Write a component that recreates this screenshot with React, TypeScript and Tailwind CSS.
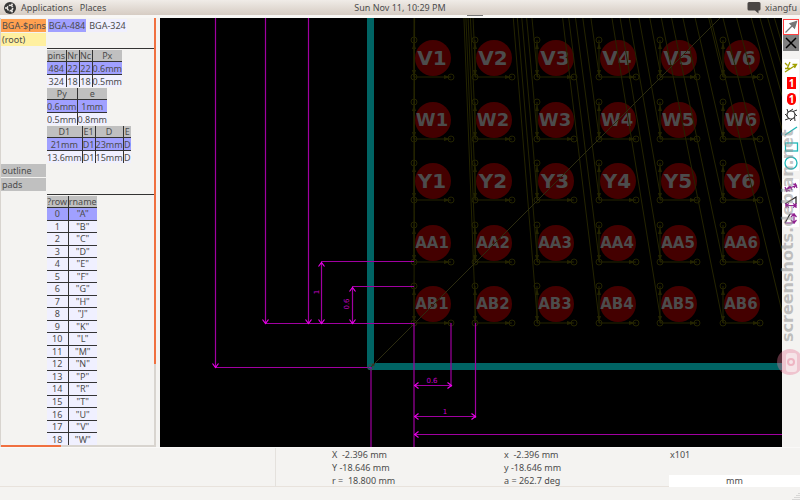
import type { ReactNode } from "react";
import clsx from "clsx";

const MAGENTA = "#a000a0";
const ARROW = "#f000f0";
const VECTOR = "#242400";

const PITCH = 62;
const columns = [433, 494, 556, 618, 679, 742];
const rows = [
  { name: "V", y: 58, size: 20 },
  { name: "W", y: 120, size: 18 },
  { name: "Y", y: 181, size: 20 },
  { name: "AA", y: 243, size: 15 },
  { name: "AB", y: 304, size: 15 },
];

const rowNames = ["A", "B", "C", "D", "E", "F", "G", "H", "J", "K", "L", "M", "N", "P", "R", "T", "U", "V", "W"];

type Dim = { x1: number; y1: number; x2: number; y2: number; start?: boolean };

const dims: Dim[] = [
  { x1: 215, y1: 10, x2: 215, y2: 367 },
  { x1: 265, y1: 10, x2: 265, y2: 323 },
  { x1: 308, y1: 10, x2: 308, y2: 323 },
  { x1: 321, y1: 262, x2: 321, y2: 323, start: true },
  { x1: 352, y1: 287, x2: 352, y2: 323, start: true },
  { x1: 414, y1: 385, x2: 451, y2: 385, start: true },
  { x1: 414, y1: 416, x2: 475, y2: 416, start: true },
  { x1: 800, y1: 434, x2: 414, y2: 434 },
];

const guides = [
  "M321 261.5H414",
  "M352 286.5H414",
  "M265 323.5H414",
  "M216 367.5H371",
  "M371 367V450",
  "M414 323V450",
  "M451 323V387",
  "M475.5 323V418",
];

function Pad({ x, y, label, size }: { x: number; y: number; label: string; size: number }) {
  const left = x - 19;
  const bottom = y + 19;
  return (
    <g>
      <circle cx={x} cy={y} r={18} fill="#440000" />
      <text x={x - 1} y={y + Math.round(size * 0.36)} fontSize={size} textAnchor="middle" fill="#4c4c4c" className="font-['DejaVu_Sans'] font-bold">
        {label}
      </text>
      <g stroke={VECTOR} fill="none">
        <circle cx={left} cy={bottom} r={3} />
        <circle cx={left} cy={y - 18} r={3} />
        <circle cx={x + 18} cy={bottom} r={3} />
        <path d={`M${left} ${y - 18}V${bottom}H${x + 18}`} />
      </g>
      <path
        fill={VECTOR}
        d={`M${left} ${y - 15}l-2 6h4z M${left} ${bottom - 1}l-2 -6h4z M${x + 17} ${bottom}l-6 -2v4z`}
      />
    </g>
  );
}

function Canvas() {
  const rays = [];
  for (let c = 0; c < 10; c++) {
    for (const row of rows) {
      rays.push({ x: 414 + c * 61.8, y: row.y + 19 });
    }
  }

  return (
    <svg viewBox="160 18 622 429" preserveAspectRatio="xMinYMin slice" className="block h-full w-full bg-black" role="img" aria-label="BGA-484 footprint">
      <defs>
        <marker id="tip" viewBox="-6 -4 7 8" refX="0" refY="0" markerWidth="7" markerHeight="8" markerUnits="userSpaceOnUse" orient="auto-start-reverse">
          <path d="M-4 -3L0 0L-4 3" fill="none" stroke={ARROW} strokeWidth="1.1" />
        </marker>
      </defs>

      <path d="M370.5 10V366.5H800" fill="none" stroke="#006464" strokeWidth="7" strokeLinejoin="round" />

      {rows.map((row) =>
        columns.map((x, i) => (
          <Pad key={`${row.name}${i + 1}`} x={x} y={row.y} label={`${row.name}${i + 1}`} size={row.size} />
        ))
      )}

      <g stroke={VECTOR} fill="none">
        {rays.map((p, i) => (
          <path key={i} d={`M417 -1190L${p.x} ${p.y}`} />
        ))}
        <path d={`M371 367L${371 + PITCH * 6} ${367 - PITCH * 6}`} stroke="#2c2c10" />
      </g>

      <g stroke={MAGENTA} strokeWidth="1.2" fill="none">
        {guides.map((d) => (
          <path key={d} d={d} />
        ))}
        {dims.map((d, i) => (
          <path
            key={i}
            d={`M${d.x1 + 0.5} ${d.y1 + 0.5}L${d.x2 + 0.5} ${d.y2 + 0.5}`}
            markerEnd="url(#tip)"
            markerStart={d.start ? "url(#tip)" : undefined}
          />
        ))}
      </g>

      <g fill="#c800c8" fontSize="7" textAnchor="middle" className="font-['DejaVu_Sans']">
        <text x="432" y="383">0.6</text>
        <text x="445" y="414">1</text>
        <text transform="translate(319 292) rotate(-90)">1</text>
        <text transform="translate(349 304) rotate(-90)">0.6</text>
      </g>

      <circle cx="371" cy="367" r="3" fill="none" stroke="#2f5050" />
      <path d="M371 367l2 -4l2 2z" fill="#3a3020" />
    </svg>
  );
}

function VarTable({ widths, head, body, className }: { widths: string[]; head: string[]; body: string[][]; className?: string }) {
  return (
    <table className={clsx("table-fixed border-collapse text-center leading-[11px]", className)}>
      <colgroup>
        {widths.map((w, i) => (
          <col key={i} className={w} />
        ))}
      </colgroup>
      <thead>
        <tr className="bg-[#c0c0c0]">
          {head.map((h) => (
            <th key={h} className="overflow-hidden border-b border-l border-[#333] p-0 font-normal whitespace-nowrap first:border-l-0">{h}</th>
          ))}
        </tr>
      </thead>
      <tbody>
        {body.map((cells, r) => (
          <tr key={r} className={r === 0 ? "bg-[#a0a0ff]" : "bg-[#f0f0ff]"}>
            {cells.map((c, i) => (
              <td
                key={i}
                className={clsx(
                  "overflow-hidden border-l border-[#333] p-0 whitespace-nowrap first:border-l-0",
                  (r < body.length - 1 || body.length > 2) && "border-b"
                )}
              >
                {c}
              </td>
            ))}
          </tr>
        ))}
      </tbody>
    </table>
  );
}

function Frame({ color, children }: { color: string; children: ReactNode }) {
  return <button className={clsx("block h-[13px] w-full overflow-hidden pl-px text-left leading-[13px] whitespace-nowrap", color)}>{children}</button>;
}

function Sidebar() {
  return (
    <aside className="flex w-[156px] shrink-0 flex-col overflow-hidden border-l border-[#d8d4cf]">
      <div className="flex min-h-0 flex-1">
        <div className="flex min-w-0 flex-1 gap-px overflow-hidden pt-px">
          <div className="flex w-[45px] shrink-0 flex-col">
            <Frame color="bg-[#ffa050]">BGA-$pins</Frame>
            <div className="mt-px">
              <Frame color="bg-[#fff0a0]">(root)</Frame>
            </div>
            <div className="mt-[118px] flex flex-col gap-px">
              <Frame color="bg-[#c0c0c0]">outline</Frame>
              <Frame color="bg-[#c0c0c0]">pads</Frame>
            </div>
          </div>

          <div className="flex-1">
            <div className="flex h-[30px] items-start gap-0.5 border-b border-[#333] pl-px leading-[13px] whitespace-nowrap">
              <button className="w-[38px] overflow-hidden bg-[#a0a0ff]">BGA-484</button>
              <button className="w-[39px] overflow-hidden bg-[#f0f0ff]">BGA-324</button>
            </div>
            <div className="flex h-[146px] flex-col items-start border-b border-[#333] pt-px">
              <VarTable
                className="mb-px h-[37px] w-[75px]"
                widths={["w-[19px]", "w-[13px]", "w-[13px]", "w-[30px]"]}
                head={["pins", "Nr", "Nc", "Px"]}
                body={[["484", "22", "22", "0.6mm"], ["324", "18", "18", "0.5mm"]]}
              />
              <VarTable
                className="mb-px h-[37px] w-[60px]"
                widths={["w-[30px]", "w-[30px]"]}
                head={["Py", "e"]}
                body={[["0.6mm", "1mm"], ["0.5mm", "0.8mm"]]}
              />
              <VarTable
                className="h-[37px] w-[84px]"
                widths={["w-[35px]", "w-[13px]", "w-[28px]", "w-[8px]"]}
                head={["D1", "E1", "D", "E"]}
                body={[["21mm", "D1", "23mm", "D"], ["13.6mm", "D1", "15mm", "D"]]}
              />
            </div>
            <VarTable
              className="mt-px h-[250px] w-[50px]"
              widths={["w-[21px]", "w-[29px]"]}
              head={["?row", "rname"]}
              body={rowNames.map((n, i) => [String(i), `"${n}"`])}
            />
          </div>
        </div>
        <div className="w-0.5 bg-[#d8d4cf]">
          <div className="h-[81%] bg-[#f07040]" />
        </div>
      </div>
      <div className="h-0.5 bg-[#d8d4cf]">
        <div className="h-full w-[39%] bg-[#f07040]" />
      </div>
    </aside>
  );
}

type Tool = { name: string; icon: ReactNode; className?: string };

const toolGroups: Tool[][] = [
  [
    { name: "Select", className: "bg-white outline outline-[#ff4040] -outline-offset-1", icon: <path d="M2.500 13.500L10 6M7 4.500L13.500 2.500L11.500 9z" stroke="#777" fill="#777" strokeWidth="1.3" /> },
    { name: "Delete", className: "bg-[#808080]", icon: <path d="M3 3L13 13M13 3L3 13" stroke="#000" strokeWidth="1.5" /> },
  ],
  [
    { name: "Vector", icon: <path d="M2 13L13 6M9.500 5.500L13.500 5.500L11.500 9M2 4L4.500 6.500M7 3L4 10M2 9.500H7" stroke="#a0a000" strokeWidth="1.3" fill="none" /> },
    {
      name: "Pad",
      icon: (
        <>
          <rect x="4" y="2" width="9" height="12" fill="#f00" />
          <text x="8.500" y="12" fontSize="10" fontWeight="bold" textAnchor="middle" fill="#fff">1</text>
        </>
      ),
    },
    {
      name: "Rounded pad",
      icon: (
        <>
          <rect x="4" y="2" width="9" height="12" rx="4.500" fill="#f00" />
          <text x="8.500" y="12" fontSize="10" fontWeight="bold" textAnchor="middle" fill="#fff">1</text>
        </>
      ),
    },
    {
      name: "Hole",
      icon: (
        <g stroke="#333" fill="none">
          <circle cx="8" cy="8" r="4" strokeWidth="1.2" />
          <path d="M7 4L10 2M10 4.500L14 3M12 7L14 9M11.500 10L12 14M9 12L7 14M6 11.500L2 13M4 9L2 7M5 5L4 2" />
        </g>
      ),
    },
    { name: "Line", icon: <path d="M2 12L14 4" stroke="#20b8b8" strokeWidth="1.3" /> },
    { name: "Rectangle", icon: <rect x="2.500" y="4" width="12" height="8" stroke="#20b8b8" strokeWidth="1.3" fill="none" /> },
    { name: "Circle", icon: <circle cx="8" cy="8" r="6" stroke="#20b8b8" strokeWidth="1.3" fill="none" /> },
  ],
  [
    { name: "Measure", icon: <path d="M2 11L14 6M2 8L4 13M3 11L6 8M4 11L7 12M12 4L14 9M13 6L10 5M13 6L11 9M7 7L9 11M8 9L6 7" stroke="#902090" strokeWidth="1.2" fill="none" /> },
    {
      name: "Measure X",
      icon: (
        <g fill="none">
          <path d="M2 9L13 2V9" stroke="#222" strokeWidth="1.2" />
          <path d="M3 8V13M13 8V13M3 10.500H13M6 8.500L3 10.500L6 12.500M10 8.500L13 10.500L10 12.500" stroke="#902090" strokeWidth="1.2" />
        </g>
      ),
    },
    {
      name: "Measure Y",
      icon: (
        <g fill="none">
          <path d="M2 12L7 3" stroke="#222" strokeWidth="1.2" />
          <path d="M2 12H12M7 3L12 3M11 3V12M8 6L11 3L13.500 6M8 9L11 12L13.500 9" stroke="#902090" strokeWidth="1.2" />
        </g>
      ),
    },
  ],
];

function Toolbar() {
  return (
    <div className="relative flex w-[18px] shrink-0 flex-col items-start gap-2 pt-px pl-px">
      {toolGroups.map((group, i) => (
        <div key={i} className="flex flex-col">
          {group.map((t) => (
            <button key={t.name} aria-label={t.name} className={clsx("size-4", t.className ?? "bg-white")}>
              <svg viewBox="0 0 16 16" className="block size-full font-['Open_Sans']">{t.icon}</svg>
            </button>
          ))}
        </div>
      ))}
      <svg viewBox="0 0 34 260" className="pointer-events-none absolute top-[104px] right-[-6px] h-[260px] w-[34px]" aria-hidden="true">
        <text transform="translate(21 220) rotate(-90)" fontSize="16" fill="#909090" fillOpacity="0.55" className="font-['DejaVu_Sans'] font-bold">
          screenshots.debian.net
        </text>
        <g>
          <circle cx="18" cy="240" r="13" fill="#e87898" fillOpacity="0.38" />
          <rect x="14" y="231" width="11" height="19" rx="3" fill="#f6e8ea" fillOpacity="0.9" />
          <circle cx="19" cy="240" r="3" fill="none" stroke="#eeb4c2" strokeWidth="2" />
        </g>
      </svg>
    </div>
  );
}

function StatusBar() {
  return (
    <footer className="shrink-0">
      <div className="grid h-[39px] grid-cols-[276fr_172fr_221fr_131fr] border-b border-[#e8e2dc] leading-[13px] whitespace-pre">
        <div className="border-r border-[#e4e1dd]" />
        <div className="pl-14">
          <p>X  -2.396 mm</p>
          <p>Y -18.646 mm</p>
          <p>r =  18.800 mm</p>
        </div>
        <div className="pl-14">
          <p>x  -2.396 mm</p>
          <p>y -18.646 mm</p>
          <p>a = 262.7 deg</p>
        </div>
        <div className="flex flex-col justify-between">
          <p className="pl-px">x101</p>
          <button className="bg-white text-center leading-[12px]">mm</button>
        </div>
      </div>
      <div className="flex h-[13px] items-end justify-end">
        <svg viewBox="0 0 8 8" className="size-2">
          <path d="M7 1V8M5 3V8M3 5V8M1 7V8" stroke="#bbb" strokeDasharray="1 1" />
        </svg>
      </div>
    </footer>
  );
}

function TopPanel() {
  return (
    <header className="grid h-[15px] shrink-0 grid-cols-[1fr_auto_1fr] items-center bg-linear-to-b from-[#f0ece8] to-[#d6ccc3] leading-[14px]">
      <nav className="flex items-center gap-[7px] pl-1">
        <button className="flex items-center gap-[5px]">
          <svg viewBox="0 0 12 12" className="size-3">
            <circle cx="6" cy="6" r="6" fill="#383838" />
            <circle cx="6" cy="6" r="2.700" fill="none" stroke="#e8e4e0" strokeWidth="1.500" strokeDasharray="4.600 1" />
            <circle cx="2" cy="6" r="1" fill="#e8e4e0" />
            <circle cx="8" cy="2.600" r="1" fill="#e8e4e0" />
            <circle cx="8" cy="9.400" r="1" fill="#e8e4e0" />
          </svg>
          Applications
        </button>
        <button>Places</button>
      </nav>
      <button>Sun Nov 11, 10:29 PM</button>
      <button className="flex items-center gap-1 justify-self-end pr-[3px]">
        <svg viewBox="0 0 14 13" className="h-[13px] w-3.5">
          <path d="M2 1H12Q13.500 1 13.500 2.500V8Q13.500 9.500 12 9.500H11.500V12.500L8 9.500H2Q.5 9.500 .5 8V2.500Q.5 1 2 1z" fill="#4a4644" />
        </svg>
        xiangfu
      </button>
    </header>
  );
}

export default function App() {
  return (
    <div className="flex h-screen flex-col overflow-hidden bg-[#f4f3f1] font-['Noto_Sans',sans-serif] text-[9px] text-[#4c4c4c]">
      <TopPanel />
      <div className="flex h-[3px] shrink-0 justify-center bg-[#f8f7f5]">
        <div className="ml-[150px] h-px w-4 bg-[#777]" />
      </div>
      <main className="flex min-h-0 flex-1 border-b border-[#faf9f8]">
        <Sidebar />
        <div className="w-1 shrink-0" />
        <div className="min-w-0 flex-1">
          <Canvas />
        </div>
        <Toolbar />
      </main>
      <StatusBar />
    </div>
  );
}
